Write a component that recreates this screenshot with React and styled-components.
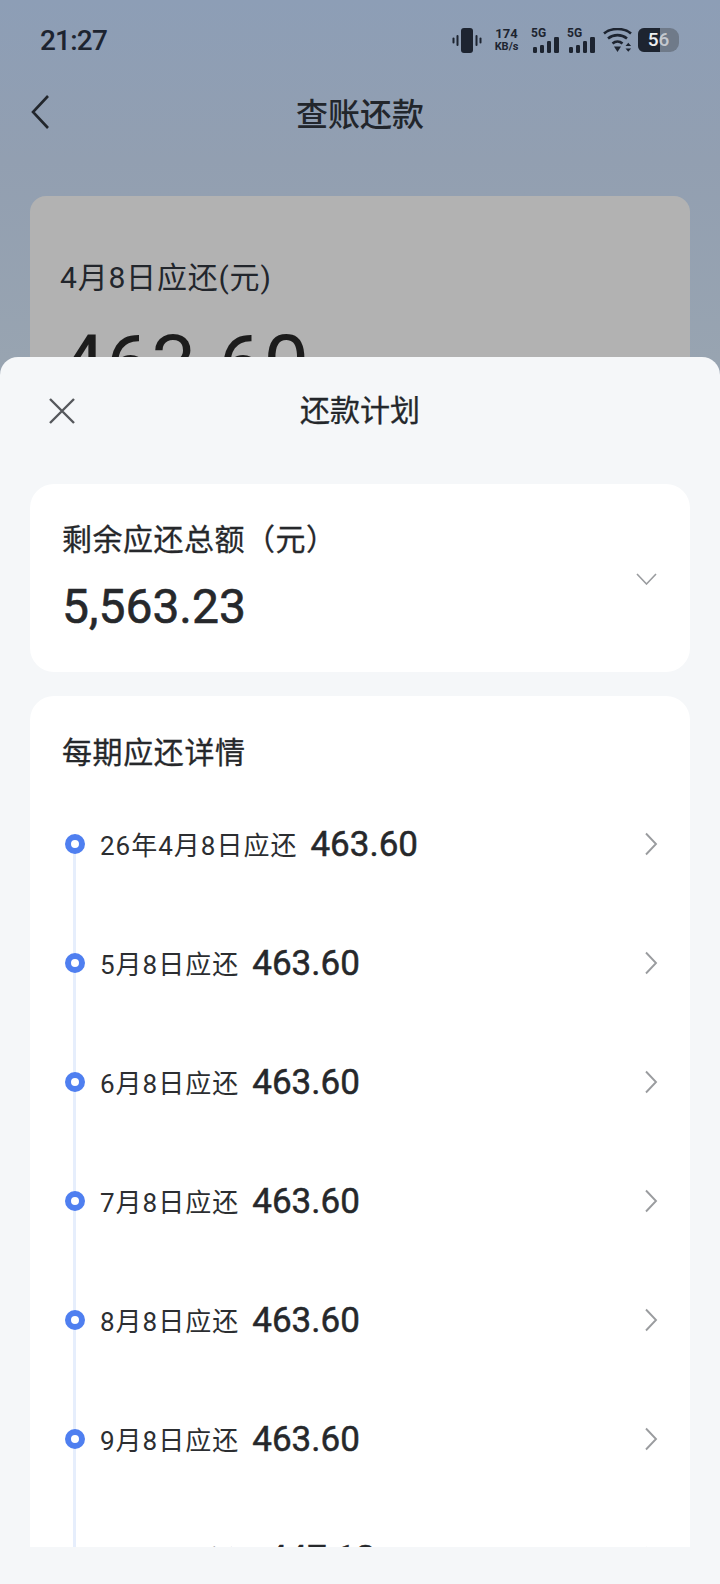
import React from 'react';
import styled, { createGlobalStyle } from 'styled-components';

const SANS = '"Roboto", "Noto Sans CJK SC", sans-serif';

const GlobalStyle = createGlobalStyle`
    html, body {
        margin: 0;
        padding: 0;
    }
    body {
        width: 720px;
        height: 1584px;
        overflow: hidden;
        background: #f5f7f9;
        font-family: ${SANS};
    }
`;

const rows = [
    { label: '26年4月8日应还', amount: '463.60' },
    { label: '5月8日应还', amount: '463.60' },
    { label: '6月8日应还', amount: '463.60' },
    { label: '7月8日应还', amount: '463.60' },
    { label: '8月8日应还', amount: '463.60' },
    { label: '9月8日应还', amount: '463.60' },
    { label: '10月8日应还', amount: '447.12' },
];

const App = () => {
    return (
        <Screen>
            <GlobalStyle />
            <Backdrop>
                <StatusBar>
                    <Clock>21:27</Clock>
                    <StatusIcons>
                        <svg width="30" height="25" viewBox="0 0 30 25" fill="#1d2430">
                            <rect x="9" y="0" width="12" height="25" rx="3" />
                            <rect x="4.5" y="7" width="2" height="11" rx="1" />
                            <rect x="23.5" y="7" width="2" height="11" rx="1" />
                            <rect x="0.5" y="9.5" width="2" height="6" rx="1" />
                            <rect x="27.5" y="9.5" width="2" height="6" rx="1" />
                        </svg>
                        <Speed>
                            <SpeedValue>174</SpeedValue>
                            <SpeedUnit>KB/s</SpeedUnit>
                        </Speed>
                        <Signal />
                        <Signal />
                        <svg width="29" height="24" viewBox="0 0 29 24" fill="none" stroke="#1d2430" strokeWidth="2.6">
                            <path d="M1 5.5C8 -.5 21 -.5 28 5.5" />
                            <path d="M5 10.5C10.5 6 18.5 6 24 10.5" />
                            <path d="M9.5 15.5C12.5 13 16.5 13 19.5 15.5" />
                            <path d="M11 18.5h7L14.5 24z" fill="#1d2430" stroke="none" />
                            <path d="M22.5 18l2.8-3.2 2.8 3.2zM22.5 20.5l2.8 3.2 2.8-3.2z" fill="#1d2430" stroke="none" />
                        </svg>
                        <Battery>
                            <BatteryLevel />
                            <BatteryText>
                                5<BatteryDigit>6</BatteryDigit>
                            </BatteryText>
                        </Battery>
                    </StatusIcons>
                </StatusBar>
                <NavBar>
                    <BackIcon viewBox="0 0 20 36" fill="none" stroke="#22262c" strokeWidth="2.6">
                        <path d="M18 2L3 18l15 16" />
                    </BackIcon>
                    <NavTitle>查账还款</NavTitle>
                </NavBar>
                <BillCard>
                    <BillLabel>4月8日应还(元)</BillLabel>
                    <BillRow>
                        <BillAmount>463.60</BillAmount>
                        <svg width="10" height="18" viewBox="0 0 10 18" fill="none" stroke="#8a8a8a" strokeWidth="1.6">
                            <path d="M1 1l8 8-8 8" />
                        </svg>
                    </BillRow>
                </BillCard>
            </Backdrop>

            <Sheet>
                <SheetHeader>
                    <CloseIcon viewBox="0 0 28 28" fill="none" stroke="#55585c" strokeWidth="2.4">
                        <path d="M2 2l24 24M26 2L2 26" />
                    </CloseIcon>
                    <SheetTitle>还款计划</SheetTitle>
                </SheetHeader>
                <SummaryCard>
                    <div>
                        <SummaryLabel>剩余应还总额（元）</SummaryLabel>
                        <SummaryAmount>5,563.23</SummaryAmount>
                    </div>
                    <svg width="21" height="12" viewBox="0 0 21 12" fill="none" stroke="#9a9c9f" strokeWidth="1.6">
                        <path d="M1 1l9.5 10L20 1" />
                    </svg>
                </SummaryCard>
                <DetailCard>
                    <DetailTitle>每期应还详情</DetailTitle>
                    <Timeline>
                        {rows.map(item => {
                            return (
                                <Row key={item.label}>
                                    <Dot />
                                    <RowLabel>{item.label}</RowLabel>
                                    <RowAmount>{item.amount}</RowAmount>
                                    <RowArrow viewBox="0 0 14 24" fill="none" stroke="#9a9c9f" strokeWidth="1.9">
                                        <path d="M2 1.5L12 12 2 22.5" />
                                    </RowArrow>
                                </Row>
                            );
                        })}
                    </Timeline>
                </DetailCard>
            </Sheet>
        </Screen>
    );
};

/*
 * Styled Components
 *
 */

const Screen = styled.div`
    position: relative;
    width: 720px;
    height: 1584px;
    overflow: hidden;
`;

const Backdrop = styled.div`
    height: 1584px;
    background: linear-gradient(180deg, #8d9eb6 0, #929fb1 160px, #98a4b1 360px);
`;

const StatusBar = styled.div`
    height: 80px;
    padding: 0 41px 0 40px;
    display: flex;
    align-items: center;
    justify-content: space-between;
    box-sizing: border-box;
`;

const Clock = styled.div`
    font-size: 28px;
    font-weight: 500;
    letter-spacing: -0.8px;
    color: #1d2430;
`;

const StatusIcons = styled.div`
    display: flex;
    align-items: center;
    gap: 8px;
`;

const Speed = styled.div`
    display: flex;
    flex-direction: column;
    align-items: center;
    width: 27px;
    margin: 0 3px;
    font-weight: 700;
    color: #1d2430;
`;

const SpeedValue = styled.span`
    font-size: 13px;
    line-height: 14px;
`;

const SpeedUnit = styled.span`
    font-size: 11px;
    line-height: 12px;
`;

const SignalWrap = styled.div`
    position: relative;
    width: 28px;
    height: 25px;
`;

const SignalTag = styled.span`
    position: absolute;
    left: 0;
    top: 0;
    font-size: 12px;
    line-height: 11px;
    font-weight: 700;
    color: #1d2430;
`;

const Bars = styled.svg`
    position: absolute;
    right: 0;
    bottom: 0;
`;

const Signal = () => {
    return (
        <SignalWrap>
            <SignalTag>5G</SignalTag>
            <Bars width="26" height="16" viewBox="0 0 26 16" fill="#1d2430">
                <rect x="0" y="10" width="4" height="6" rx="1.2" />
                <rect x="7" y="8" width="4" height="8" rx="1.2" />
                <rect x="14" y="4" width="4" height="12" rx="1.2" />
                <rect x="21" y="0" width="5" height="16" rx="1.2" />
            </Bars>
        </SignalWrap>
    );
};

const Battery = styled.div`
    position: relative;
    width: 41px;
    height: 24px;
    margin-left: -2px;
    border-radius: 6px 9px 9px 6px;
    background: #6f7a89;
    overflow: hidden;
`;

const BatteryLevel = styled.div`
    width: 53%;
    height: 100%;
    background: #1d2430;
`;

const BatteryText = styled.span`
    position: absolute;
    inset: 0;
    text-align: center;
    font-size: 19px;
    line-height: 24px;
    font-weight: 500;
    color: #eceef0;
`;

const BatteryDigit = styled.span`
    color: #c4c8ce;
`;

const NavBar = styled.div`
    position: relative;
    height: 70px;
    padding-bottom: 6px;
    box-sizing: border-box;
    display: flex;
    align-items: center;
    justify-content: center;
`;

const BackIcon = styled.svg`
    position: absolute;
    left: 30px;
    top: 14px;
    width: 20px;
    height: 36px;
`;

const NavTitle = styled.div`
    font-size: 32px;
    font-weight: 500;
    color: #22262c;
`;

const BillCard = styled.div`
    margin: 46px 30px 0;
    height: 400px;
    padding: 59px 30px 0;
    box-sizing: border-box;
    border-radius: 16px;
    background: #b2b2b2;
`;

const BillLabel = styled.div`
    font-size: 30px;
    line-height: 46px;
    letter-spacing: 0.8px;
    color: #22262c;
`;

const BillRow = styled.div`
    display: flex;
    align-items: center;
    gap: 20px;
    margin-top: 18px;
`;

const BillAmount = styled.div`
    font-size: 81px;
    line-height: 94px;
    color: #1c1c1c;
`;

const Sheet = styled.div`
    position: absolute;
    left: 0;
    right: 0;
    top: 357px;
    bottom: 0;
    padding: 0 30px;
    background: #f5f7f9;
    border-radius: 18px 18px 0 0;
`;

const SheetHeader = styled.div`
    position: relative;
    height: 127px;
    padding-top: 29px;
    box-sizing: border-box;
    text-align: center;
`;

const CloseIcon = styled.svg`
    position: absolute;
    left: 18px;
    top: 40px;
    width: 28px;
    height: 28px;
`;

const SheetTitle = styled.div`
    font-size: 30px;
    line-height: 50px;
    -webkit-text-stroke: 0.3px #24272b;
    color: #24272b;
`;

const SummaryCard = styled.div`
    height: 188px;
    padding: 2px 33px 0 32px;
    box-sizing: border-box;
    display: flex;
    align-items: center;
    justify-content: space-between;
    border-radius: 24px;
    background: #fff;
`;

const SummaryLabel = styled.div`
    font-size: 30px;
    line-height: 44px;
    letter-spacing: 0.5px;
    -webkit-text-stroke: 0.3px #26282b;
    color: #26282b;
`;

const SummaryAmount = styled.div`
    margin-top: 12px;
    font-size: 48px;
    line-height: 66px;
    -webkit-text-stroke: 0.6px #26282b;
    color: #26282b;
`;

const DetailCard = styled.div`
    margin-top: 24px;
    height: 851px;
    padding: 35px 33px 0 32px;
    box-sizing: border-box;
    border-radius: 24px 24px 0 0;
    background: #fff;
    overflow: hidden;
`;

const DetailTitle = styled.div`
    font-size: 30px;
    line-height: 44px;
    letter-spacing: 0.6px;
    -webkit-text-stroke: 0.3px #26282b;
    color: #26282b;
`;

const Timeline = styled.div`
    position: relative;
    margin-top: 9px;

    &::before {
        content: '';
        position: absolute;
        left: 11px;
        top: 59px;
        bottom: 0;
        width: 3px;
        background: #e6eefc;
    }
`;

const Row = styled.div`
    position: relative;
    height: 119px;
    display: flex;
    align-items: center;
`;

const Dot = styled.div`
    width: 20px;
    height: 20px;
    margin-left: 3px;
    box-sizing: border-box;
    border: 6px solid #4f7ff0;
    border-radius: 50%;
    background: #fff;
    flex-shrink: 0;
    z-index: 1;
`;

const RowLabel = styled.div`
    margin-left: 15px;
    font-size: 26px;
    letter-spacing: 1px;
    color: #2c2e31;
`;

const RowAmount = styled.div`
    margin-left: 13px;
    padding-top: 2px;
    font-size: 35px;
    -webkit-text-stroke: 0.5px #26282b;
    color: #26282b;
`;

const RowArrow = styled.svg`
    margin-left: auto;
    margin-right: -1px;
    width: 14px;
    height: 24px;
`;

export default App;
